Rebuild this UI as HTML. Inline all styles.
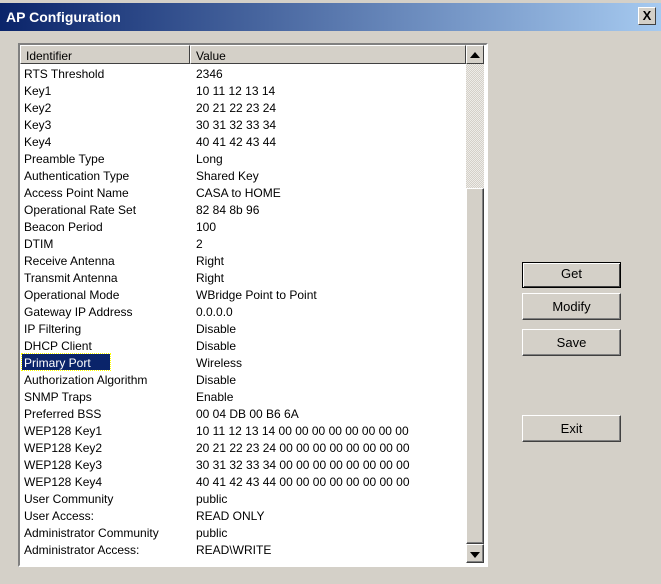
<!DOCTYPE html>
<html><head><style>
body{margin:0;width:661px;height:584px;background:#d4d0c8;font-family:"Liberation Sans",Arial,sans-serif;font-size:12px;position:relative;overflow:hidden}
.title{position:absolute;left:0;top:3px;width:661px;height:28px;background:linear-gradient(90deg,#0a246a,#a6caf0)}
.title span{position:absolute;left:6px;top:6px;color:#fff;font-weight:bold;font-size:14px}
.close{position:absolute;left:638px;top:7px;width:16px;height:16px;background:#d4d0c8;border:1px solid;border-color:#fff #404040 #404040 #fff;font:bold 13px "Liberation Sans";text-align:center;line-height:16px}
.list{position:absolute;left:18px;top:43px;width:466px;height:520px;border:2px solid;border-color:#808080 #fff #fff #808080;background:#fff}
.hdr{position:absolute;top:0;height:19px;background:#d4d0c8;border:1px solid;border-color:#fff #404040 #404040 #fff;box-sizing:border-box;padding:3px 5px}
.row{position:absolute;left:4px;height:17px;line-height:17px;white-space:pre}
.v{position:absolute;left:176px;height:17px;line-height:17px}
.sb{position:absolute;left:446px;top:19px;width:18px;height:482px;background-color:#eeece8;background-image:linear-gradient(45deg,#d4d0c8 25%,transparent 25%,transparent 75%,#d4d0c8 75%),linear-gradient(45deg,#d4d0c8 25%,transparent 25%,transparent 75%,#d4d0c8 75%);background-size:2px 2px;background-position:0 0,1px 1px}
.btn{position:absolute;box-sizing:border-box;background:#d4d0c8;border:1px solid;border-color:#fff #404040 #404040 #fff;box-shadow:inset -1px -1px #808080;text-align:center;font-size:13px}
.tri{position:absolute;width:0;height:0;border-left:5px solid transparent;border-right:5px solid transparent}
</style></head><body>
<div class="title"><span>AP Configuration</span></div>
<div class="close">X</div>
<div class="list">
<div class="hdr" style="left:0;width:170px">Identifier</div>
<div class="hdr" style="left:170px;width:276px">Value</div>
<div class="hdr" style="left:446px;width:18px;padding:0"><div class="tri" style="left:3px;top:6px;border-bottom:6px solid #000"></div></div>
<div class="sb"></div>
<div class="btn" style="left:446px;top:143px;width:18px;height:356px"></div>
<div class="btn" style="left:446px;top:499px;width:18px;height:19px"><div class="tri" style="left:3px;top:7px;border-top:6px solid #000"></div></div>
<div style="position:absolute;left:2px;top:309px;width:88px;height:16px;background:#0a246a;outline:1px dotted #ff0"></div>
<div id="rows"></div>
</div>
<div class="btn" style="left:522px;top:262px;width:99px;height:26px;line-height:22px;border:1px solid #000;box-shadow:inset 1px 1px #fff,inset -1px -1px #404040">Get</div>
<div class="btn" style="left:522px;top:293px;width:99px;height:27px;line-height:25px">Modify</div>
<div class="btn" style="left:522px;top:329px;width:99px;height:27px;line-height:25px">Save</div>
<div class="btn" style="left:522px;top:415px;width:99px;height:27px;line-height:25px">Exit</div>
<script>
var d=[["RTS Threshold","2346"],["Key1","10 11 12 13 14"],["Key2","20 21 22 23 24"],["Key3","30 31 32 33 34"],["Key4","40 41 42 43 44"],["Preamble Type","Long"],["Authentication Type","Shared Key"],["Access Point Name","CASA to HOME"],["Operational Rate Set","82 84 8b 96"],["Beacon Period","100"],["DTIM","2"],["Receive Antenna","Right"],["Transmit Antenna","Right"],["Operational Mode","WBridge Point to Point"],["Gateway IP Address","0.0.0.0"],["IP Filtering","Disable"],["DHCP Client","Disable"],["Primary Port","Wireless"],["Authorization Algorithm","Disable"],["SNMP Traps","Enable"],["Preferred BSS","00 04 DB 00 B6 6A"],["WEP128 Key1","10 11 12 13 14 00 00 00 00 00 00 00 00"],["WEP128 Key2","20 21 22 23 24 00 00 00 00 00 00 00 00"],["WEP128 Key3","30 31 32 33 34 00 00 00 00 00 00 00 00"],["WEP128 Key4","40 41 42 43 44 00 00 00 00 00 00 00 00"],["User Community","public"],["User Access:","READ ONLY"],["Administrator Community","public"],["Administrator Access:","READ\\WRITE"]];
var h="";d.forEach(function(r,i){var t=21+i*17;h+='<div class="row" style="top:'+t+'px;'+(i==17?'color:#fff':'')+'">'+r[0]+'</div><div class="v" style="top:'+t+'px">'+r[1]+'</div>';});
document.getElementById("rows").innerHTML=h;
</script>
</body></html>
